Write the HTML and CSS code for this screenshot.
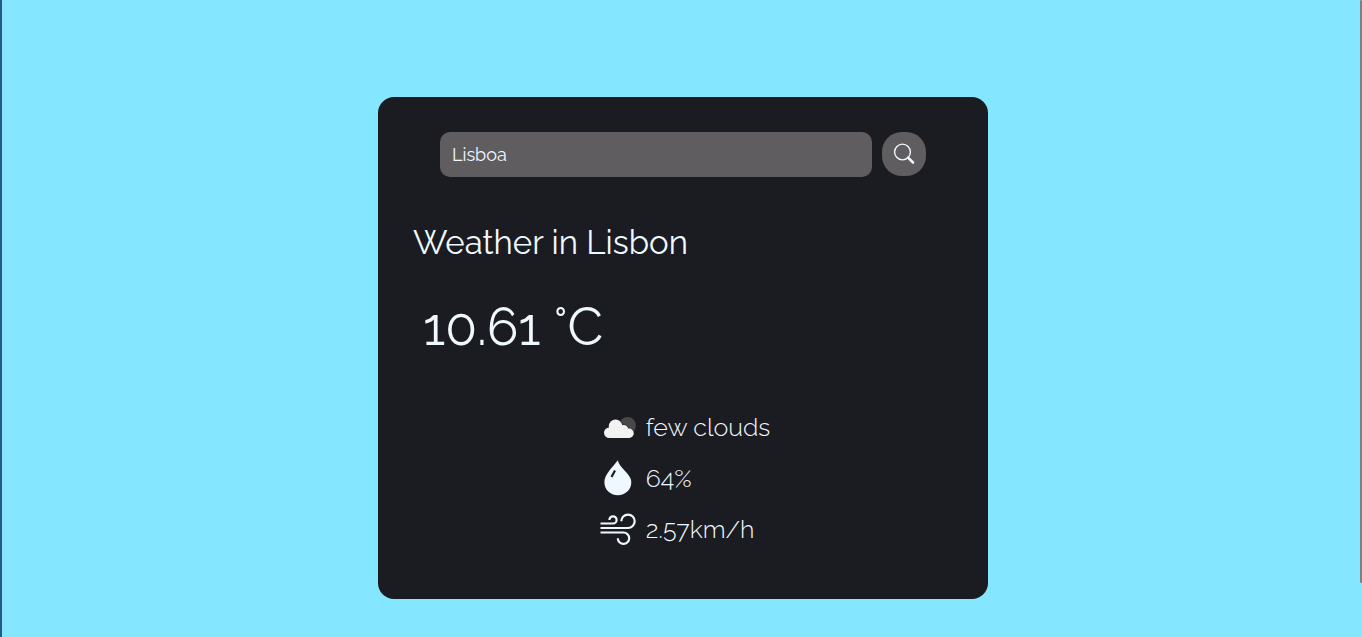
FILE: index.html
```html
<!DOCTYPE html>
<html lang="en">
<head>
<meta charset="utf-8">
<meta name="viewport" content="width=device-width, initial-scale=1">
<title>Weather</title>
<link rel="stylesheet" href="styles.css">
</head>
<body>
<div class="edge"></div>
<div class="scroll-thumb"></div>
<main class="card">
  <form class="search">
    <input class="search-input" type="text" value="Lisboa" aria-label="City">
    <button class="search-button" type="button" aria-label="Search">
      <svg width="22" height="22" viewBox="0 0 22 22" fill="none" stroke="currentColor">
        <circle cx="9.500" cy="9" r="7.900" stroke-width="1.400"/>
        <path d="M15.100 14.600 20 19.500" stroke-width="2.600" stroke-linecap="round"/>
      </svg>
    </button>
  </form>
  <h1 class="city">Weather in Lisbon</h1>
  <p class="temperature">10.61 °C</p>
  <ul class="details">
    <li class="detail">
      <svg class="icon" viewBox="0 0 36 36" aria-hidden="true">
        <circle cx="27.500" cy="16.500" r="8.500" fill="#484849"/>
        <g fill="#303034">
          <circle cx="16" cy="17.300" r="7"/>
          <circle cx="23.700" cy="20.800" r="5.500"/>
          <circle cx="29.200" cy="24.300" r="4.900"/>
        </g>
        <g fill="#f2f2f2">
          <circle cx="15.500" cy="17.300" r="6.700"/>
          <circle cx="9.300" cy="23.700" r="5.300"/>
          <circle cx="23.500" cy="21" r="5"/>
          <circle cx="29" cy="24.300" r="4.700"/>
          <path d="M9.300 19H23.500L29 21V29H9.300Z"/>
        </g>
      </svg>
      <span>few clouds</span>
    </li>
    <li class="detail">
      <svg class="icon" viewBox="0 0 36 36" aria-hidden="true">
        <path d="M17.700.3C19 4.500 21.500 7.300 24.500 10.500C28.500 14.800 31.300 18 31.300 22.300C31.300 29.800 25.300 35.200 17.800 35.200S4.400 29.800 4.400 22.300C4.400 14.500 12.500 7.500 17.700.3Z" fill="currentColor"/>
        <path d="M15 10.500 11.500 17" stroke="#1b1c21" stroke-width="2.200"/>
      </svg>
      <span>64%</span>
    </li>
    <li class="detail">
      <svg class="icon" viewBox="0 0 36 36" aria-hidden="true" fill="none" stroke="currentColor" stroke-width="2.200">
        <path d="M.5 12.500H13A3.600 3.600 0 1 0 9.400 8.900M.5 17H28A6.700 6.700 0 1 0 21.300 10.300M.5 21.500H23.500A5.700 5.700 0 1 1 17.800 27.200"/>
      </svg>
      <span>2.57km/h</span>
    </li>
  </ul>
</main>
</body>
</html>
```
FILE: styles.css
```css
* {
  box-sizing: border-box;
}

body {
  margin: 0;
  padding: 97px 0 38px 4px;
  min-height: 100vh;
  background: #84e6ff;
  color: #f0f8ff;
  font-family: Raleway, "Open Sans", sans-serif;
  font-weight: 300;
}

.edge {
  position: absolute;
  top: 0;
  bottom: 0;
  left: 0;
  width: 2px;
  background: #27588a;
}

.scroll-thumb {
  position: absolute;
  top: 0;
  right: 0;
  width: 2px;
  height: 583px;
  border-radius: 1px;
  background: #808080;
}

.card {
  max-width: 610px;
  margin: 0 auto;
  padding: 35px 35px 52px;
  border-radius: 16px;
  background: #1b1c21;
}

.search {
  display: flex;
  align-items: flex-start;
  gap: 10px;
  padding: 0 27px;
}

.search-input {
  flex: 1;
  min-width: 0;
  height: 45px;
  padding: 0 12px;
  border: 0;
  border-radius: 10px;
  background: #605d60;
  color: inherit;
  font: inherit;
  font-size: 18px;
  font-weight: 400;
}

.search-button {
  display: grid;
  place-items: center;
  width: 44px;
  height: 44px;
  padding: 0;
  border: 0;
  border-radius: 20px;
  background: #605d60;
  color: inherit;
}

.city {
  margin: 44px 0 0;
  font-size: 33px;
  line-height: 44px;
  font-weight: 400;
}

.temperature {
  margin: 29px 0 0 10px;
  font-size: 52px;
  line-height: 66px;
  font-weight: 400;
}

.details {
  display: grid;
  gap: 15px;
  width: max-content;
  margin: 49px auto 0;
  padding: 0 0 0 4px;
  list-style: none;
}

.detail {
  display: flex;
  align-items: center;
  gap: 10px;
  font-size: 25px;
  line-height: 36px;
}

.icon {
  flex: none;
  width: 36px;
  height: 36px;
}
```
